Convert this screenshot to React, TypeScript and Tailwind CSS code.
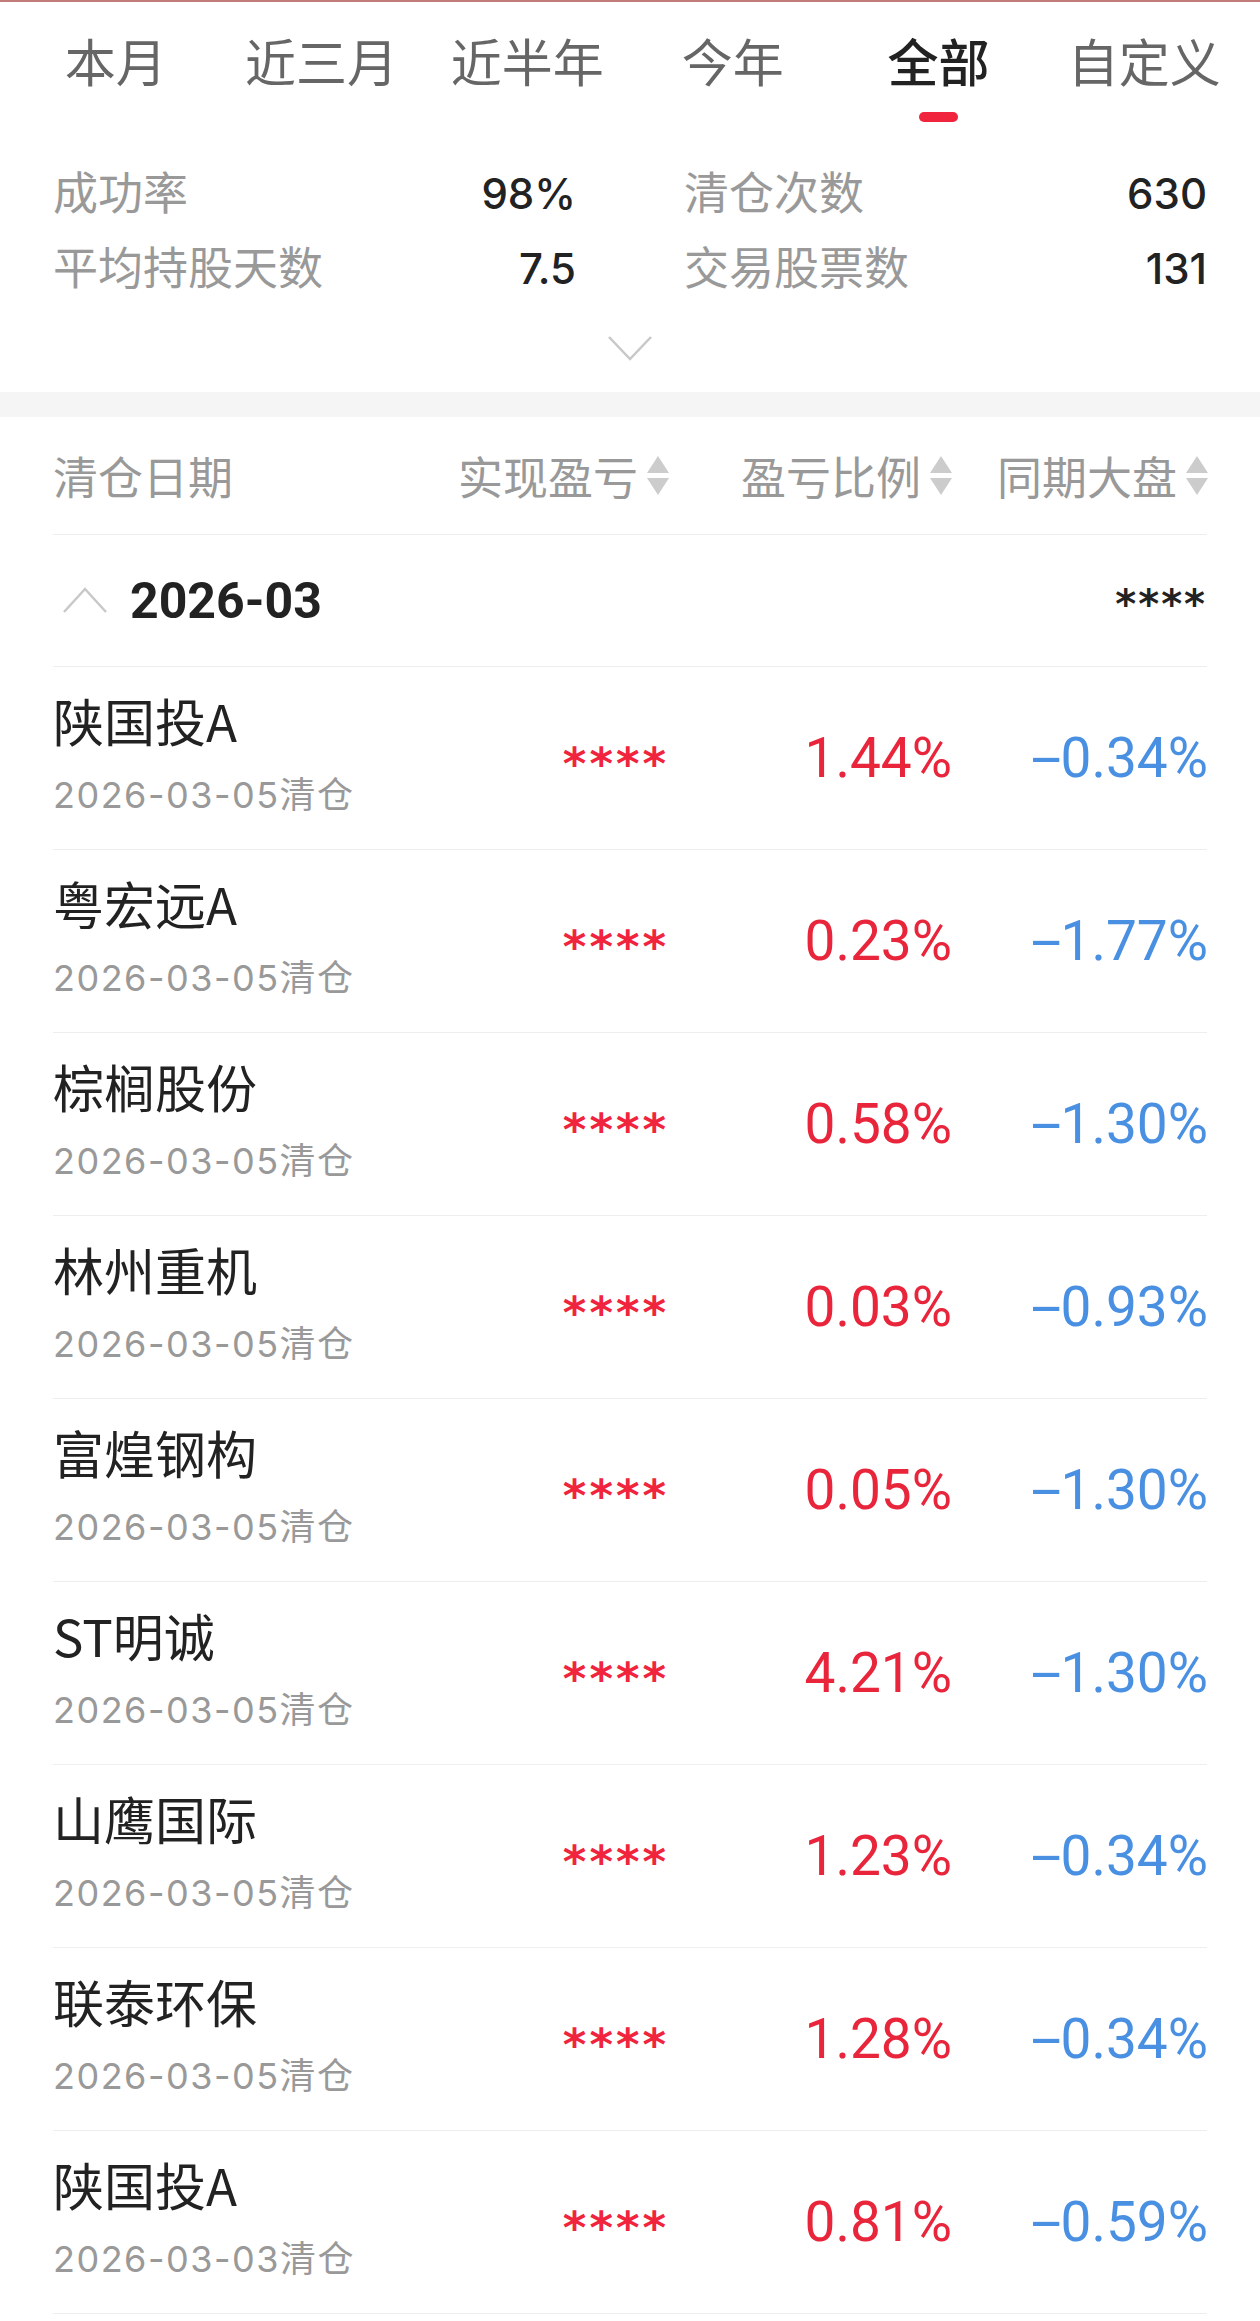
import React from "react";

const tabs = ["本月", "近三月", "近半年", "今年", "全部", "自定义"];

const rows = [
  { name: "陕国投A", date: "2026-03-05清仓", pct: "1.44%", mkt: "-0.34%" },
  { name: "粤宏远A", date: "2026-03-05清仓", pct: "0.23%", mkt: "-1.77%" },
  { name: "棕榈股份", date: "2026-03-05清仓", pct: "0.58%", mkt: "-1.30%" },
  { name: "林州重机", date: "2026-03-05清仓", pct: "0.03%", mkt: "-0.93%" },
  { name: "富煌钢构", date: "2026-03-05清仓", pct: "0.05%", mkt: "-1.30%" },
  { name: "ST明诚", date: "2026-03-05清仓", pct: "4.21%", mkt: "-1.30%" },
  { name: "山鹰国际", date: "2026-03-05清仓", pct: "1.23%", mkt: "-0.34%" },
  { name: "联泰环保", date: "2026-03-05清仓", pct: "1.28%", mkt: "-0.34%" },
  { name: "陕国投A", date: "2026-03-03清仓", pct: "0.81%", mkt: "-0.59%" },
];

function SortIcon() {
  return (
    <svg width="22" height="40" viewBox="0 0 22 40" className="shrink-0">
      <polygon points="11,0 22,17 0,17" fill="#cccccc" />
      <polygon points="0,22 22,22 11,39" fill="#cccccc" />
    </svg>
  );
}

function Stat({ label, value }: { label: string; value: string }) {
  return (
    <div className="flex h-[75px] items-center justify-between">
      <span className="text-[45px] leading-[75px] text-[#999999]">{label}</span>
      <span className="mt-[6px] font-['Inter','Noto_Sans_CJK_SC',sans-serif] text-[42px] font-medium leading-[60px] text-[#222222]">
        {value}
      </span>
    </div>
  );
}

function Signed({ text }: { text: string }) {
  if (text.startsWith("-")) {
    return (
      <>
        <span className="inline-block w-[29px]">
          <span className="inline-block origin-left scale-x-[2]">-</span>
        </span>
        {text.slice(1)}
      </>
    );
  }
  return <>{text}</>;
}

export default function App() {
  return (
    <div className="min-h-[2321px] w-[1260px] bg-white font-['Noto_Sans_CJK_SC',sans-serif]">
      <div className="h-[2px] bg-[#c27b7b]" />

      {/* Tabs */}
      <div className="flex px-[13px] pt-[30px]">
        {tabs.map((t) => {
          const active = t === "全部";
          return (
            <div key={t} className="flex flex-1 flex-col items-center">
              <span
                className={
                  active
                    ? "text-[51px] font-medium leading-[56px] text-[#222222]"
                    : "text-[51px] leading-[56px] text-[#666666]"
                }
              >
                {t}
              </span>
              {active && <div className="mt-[24px] h-[10px] w-[39px] rounded-full bg-[#f0243c]" />}
            </div>
          );
        })}
      </div>

      {/* Stats */}
      <div className="mt-[31px] grid grid-cols-2 gap-x-[108px] px-[53px]">
        <Stat label="成功率" value="98%" />
        <Stat label="清仓次数" value="630" />
        <Stat label="平均持股天数" value="7.5" />
        <Stat label="交易股票数" value="131" />
      </div>

      <div className="flex justify-center pb-[31px] pt-[32px]">
        <svg width="46" height="26" viewBox="0 0 46 26">
          <polyline points="2,2 23,24 44,2" fill="none" stroke="#c8c8c8" strokeWidth="2.5" />
        </svg>
      </div>

      <div className="h-[25px] bg-[#f5f5f5]" />

      {/* Table */}
      <div className="mx-[53px]">
        <div className="grid h-[118px] grid-cols-[376px_240px_283px_256px] items-center border-b border-[#eeeeee]">
          <span className="text-[45px] text-[#999999]">清仓日期</span>
          <div className="flex items-center justify-end gap-[9px]">
            <span className="text-[45px] text-[#999999]">实现盈亏</span>
            <SortIcon />
          </div>
          <div className="flex items-center justify-end gap-[9px]">
            <span className="text-[45px] text-[#999999]">盈亏比例</span>
            <SortIcon />
          </div>
          <div className="flex items-center justify-end gap-[9px]">
            <span className="text-[45px] text-[#999999]">同期大盘</span>
            <SortIcon />
          </div>
        </div>

        <div className="flex h-[132px] items-center justify-between border-b border-[#eeeeee]">
          <div className="flex items-center">
            <svg width="46" height="27" viewBox="0 0 46 27" className="ml-[9px]">
              <polyline points="2,25 23,2 44,25" fill="none" stroke="#c8c8c8" strokeWidth="2.5" />
            </svg>
            <span className="ml-[22px] font-['Roboto','Noto_Sans_CJK_SC',sans-serif] text-[50px] font-bold leading-[60px] text-[#222222]">
              2026-03
            </span>
          </div>
          <span className="pt-[6px] font-['DejaVu_Sans',sans-serif] text-[40px] font-bold leading-[50px] tracking-[2px] text-[#222222]">
            ****
          </span>
        </div>

        {rows.map((r, i) => (
          <div
            key={i}
            className="grid h-[183px] grid-cols-[376px_240px_283px_256px] border-b border-[#eeeeee]"
          >
            <div className="flex flex-col pt-[23px]">
              <span className="text-[51px] leading-[60px] text-[#222222]">{r.name}</span>
              <span className="mt-[23px] font-['Inter','Noto_Sans_CJK_SC',sans-serif] text-[36px] leading-[44px] tracking-[1.5px] text-[#999999]">
                {r.date}
              </span>
            </div>
            <div className="flex items-center justify-end">
              <span className="pt-[12px] font-['DejaVu_Sans',sans-serif] text-[45px] font-bold leading-[50px] tracking-[3px] text-[#f0243c]">
                ****
              </span>
            </div>
            <div className="flex items-center justify-end">
              <span className="font-['Roboto','Noto_Sans_CJK_SC',sans-serif] text-[55px] leading-[64px] text-[#e8253b]">
                {r.pct}
              </span>
            </div>
            <div className="flex items-center justify-end">
              <span className="font-['Roboto','Noto_Sans_CJK_SC',sans-serif] text-[55px] leading-[64px] text-[#4a90e2]">
                <Signed text={r.mkt} />
              </span>
            </div>
          </div>
        ))}
      </div>
    </div>
  );
}
